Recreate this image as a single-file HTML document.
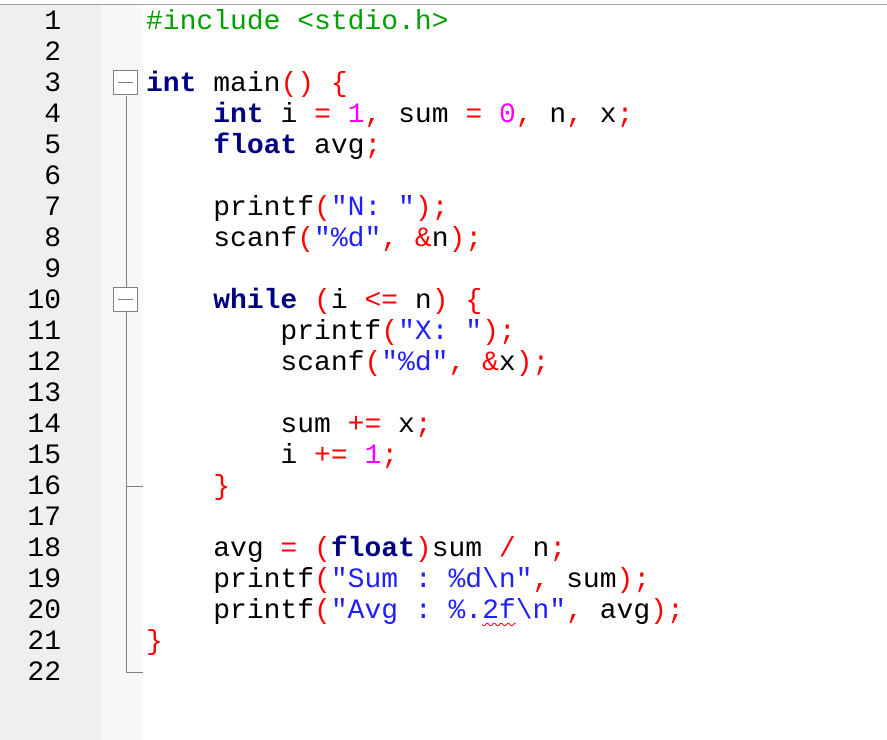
<!DOCTYPE html>
<html><head><meta charset="utf-8"><style>
html,body{margin:0;padding:0;background:#fff;width:887px;height:740px;overflow:hidden}
.top{position:absolute;left:0;top:0;width:887px;height:4px;background:#fff;border-bottom:1px solid #a0a0a0}
.gut{position:absolute;left:0;top:5px;width:102px;height:735px;background:#efefef}
.fold{position:absolute;left:102px;top:5px;width:41px;height:735px;background:#f7f7f7}
.ln,.code{position:absolute;top:7px;font-family:"Liberation Mono",monospace;font-size:28px;line-height:31px;white-space:pre}
.ln{left:0;width:61px;text-align:right;color:#000}
.code{left:146px;color:#000}
.k{color:#000080;font-weight:bold}.o{color:#ff0000}.n{color:#ff00ff}.s{color:#2020ff}.p{color:#00a000}
.sq{text-decoration:underline wavy #e00000;text-decoration-thickness:1px;text-underline-offset:4px}
.box{position:absolute;left:113px;width:25px;height:25px;border:1px solid #808080;background:#fff;box-sizing:border-box}
.box:after{content:"";position:absolute;left:4px;right:4px;top:11px;height:1px;background:#808080}
.vl{position:absolute;left:126px;width:1px;background:#808080}
.hl{position:absolute;left:126px;width:17px;height:1px;background:#808080}
</style></head><body>
<div class="top"></div><div class="gut"></div><div class="fold"></div>
<div class="ln">1
2
3
4
5
6
7
8
9
10
11
12
13
14
15
16
17
18
19
20
21
22</div>
<div class="vl" style="top:96px;height:577px"></div>
<div class="box" style="top:70px"></div>
<div class="box" style="top:287px"></div>
<div class="hl" style="top:486px"></div>
<div class="hl" style="top:672px"></div>
<div class="code"><span class="p">#include &lt;stdio.h&gt;</span>

<span class="k">int</span> main<span class="o">()</span> <span class="o">{</span>
    <span class="k">int</span> i <span class="o">=</span> <span class="n">1</span><span class="o">,</span> sum <span class="o">=</span> <span class="n">0</span><span class="o">,</span> n<span class="o">,</span> x<span class="o">;</span>
    <span class="k">float</span> avg<span class="o">;</span>

    printf<span class="o">(</span><span class="s">"N: "</span><span class="o">);</span>
    scanf<span class="o">(</span><span class="s">"%d"</span><span class="o">,</span> <span class="o">&amp;</span>n<span class="o">);</span>

    <span class="k">while</span> <span class="o">(</span>i <span class="o">&lt;=</span> n<span class="o">)</span> <span class="o">{</span>
        printf<span class="o">(</span><span class="s">"X: "</span><span class="o">);</span>
        scanf<span class="o">(</span><span class="s">"%d"</span><span class="o">,</span> <span class="o">&amp;</span>x<span class="o">);</span>

        sum <span class="o">+=</span> x<span class="o">;</span>
        i <span class="o">+=</span> <span class="n">1</span><span class="o">;</span>
    <span class="o">}</span>

    avg <span class="o">=</span> <span class="o">(</span><span class="k">float</span><span class="o">)</span>sum <span class="o">/</span> n<span class="o">;</span>
    printf<span class="o">(</span><span class="s">"Sum : %d\n"</span><span class="o">,</span> sum<span class="o">);</span>
    printf<span class="o">(</span><span class="s">"Avg : %.<span class="sq">2f</span>\n"</span><span class="o">,</span> avg<span class="o">);</span>
<span class="o">}</span>
</div>
</body></html>
